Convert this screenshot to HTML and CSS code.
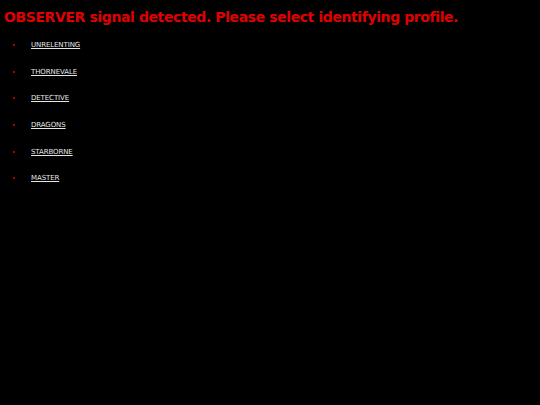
FILE: index.html
```html
<!DOCTYPE html>
<html>
<head>
<meta charset="utf-8">
<link rel="stylesheet" href="styles.css">
</head>
<body>
<h1 class="title">OBSERVER signal detected. Please select identifying profile.</h1>
<ul class="profiles">
<li class="profile"><a class="profile-link" href="#">UNRELENTING</a></li>
<li class="profile"><a class="profile-link" href="#">THORNEVALE</a></li>
<li class="profile"><a class="profile-link" href="#">DETECTIVE</a></li>
<li class="profile"><a class="profile-link" href="#">DRAGONS</a></li>
<li class="profile"><a class="profile-link" href="#">STARBORNE</a></li>
<li class="profile"><a class="profile-link" href="#">MASTER</a></li>
</ul>
</body>
</html>
```
FILE: styles.css
```css
html, body {
  margin: 0;
  padding: 0;
  background: #000;
  height: 100%;
}
body {
  font-family: "DejaVu Sans", Verdana, sans-serif;
}
.title {
  margin: 0;
  padding: 9px 4px 0 4px;
  font-size: 14px;
  line-height: 17px;
  font-weight: bold;
  letter-spacing: -0.4px;
  color: #e00000;
}
.profiles {
  list-style: none;
  margin: 0;
  padding: 15px 0 0 31px;
}
.profile {
  position: relative;
  height: 26.7px;
  font-size: 7px;
  line-height: 9px;
  letter-spacing: -0.1px;
}
.profile::before {
  content: "";
  position: absolute;
  left: -18px;
  top: 3px;
  width: 2px;
  height: 2px;
  background: #b00000;
}
.profile-link {
  color: #e6e6e6;
  text-decoration: underline;
}
```
